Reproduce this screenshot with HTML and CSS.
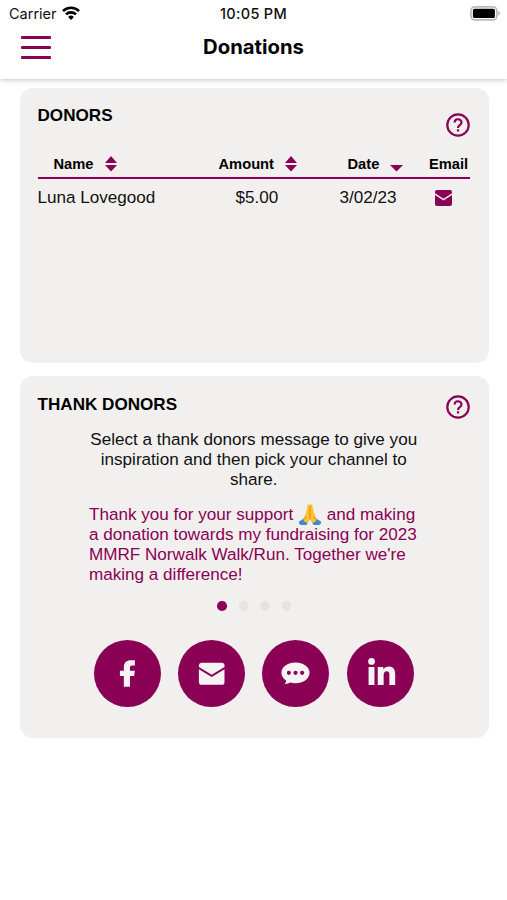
FILE: index.html
```html
<!DOCTYPE html>
<html lang="en">
<head>
    <meta charset="UTF-8">
    <meta name="viewport" content="width=device-width, initial-scale=1.0">
    <title>Donations</title>
    <link rel="stylesheet" href="styles.css">
</head>
<body>

    <header class="header">
        <div class="status">
            <div class="carrier">
                <span>Carrier</span>
                <svg width="18" height="14" viewBox="0 0 18 14">
                    <g fill="none" stroke="#000" stroke-width="2.6">
                        <path d="M1 5.1a11.3 11.3 0 0 1 16 0"/>
                        <path d="M4 8.4a7.1 7.1 0 0 1 10 0"/>
                    </g>
                    <path d="M9 13.9l-2.9-3a4.1 4.1 0 0 1 5.8 0z"/>
                </svg>
            </div>
            <span class="time">10:05 PM</span>
            <svg class="battery" width="31" height="15" viewBox="0 0 31 15">
                <rect x=".9" y=".9" width="26" height="13" rx="3.8" fill="#fff" stroke="#bbb" stroke-width="1.7"/>
                <rect x="2.9" y="2.8" width="22" height="9.2" rx="1.6"/>
                <path d="M28.3 5v4.6c2-.6 2-4 0-4.6z" fill="#aaa"/>
            </svg>
        </div>
        <div class="navbar">
            <div class="menu">
                <span></span>
                <span></span>
                <span></span>
            </div>
            <h1>Donations</h1>
        </div>
    </header>

    <main>
        <section class="card donors">
            <div class="card-top">
                <h2>DONORS</h2>
                <svg class="help" width="24" height="24" viewBox="0 0 24 24">
                    <circle cx="12" cy="12" r="10.7"/>
                    <path d="M8.6 9.6c0-4.5 6.9-4.4 6.9-.2 0 2.7-3.5 2.8-3.5 5.5M12 16.3v2.3"/>
                </svg>
            </div>
            <div class="row head">
                <div class="name">Name
                    <svg class="sort" width="12" height="16" viewBox="0 0 12 16"><path d="M6 0l6 7H0zM0 9h12l-6 6.5z"/></svg>
                </div>
                <div class="amount">Amount
                    <svg class="sort" width="12" height="16" viewBox="0 0 12 16"><path d="M6 0l6 7H0zM0 9h12l-6 6.5z"/></svg>
                </div>
                <div class="date">Date
                    <svg class="sort" width="13" height="16" viewBox="0 0 13 16"><path d="M0 9h13l-6.5 6.5z"/></svg>
                </div>
                <div class="email">Email</div>
            </div>
            <div class="row">
                <div class="name">Luna Lovegood</div>
                <div class="amount">$5.00</div>
                <div class="date">3/02/23</div>
                <div class="email">
                    <svg width="17" height="16" viewBox="0 0 26 23" preserveAspectRatio="none">
                        <path class="fill" d="M3 0h20a3 3 0 0 1 3 3v1.500L13 12.500 0 4.500V3a3 3 0 0 1 3-3zM0 7.200l13 8 13-8V20a3 3 0 0 1-3 3H3a3 3 0 0 1-3-3z"/>
                    </svg>
                </div>
            </div>
        </section>

        <section class="card thank">
            <div class="card-top">
                <h2>THANK DONORS</h2>
                <svg class="help" width="24" height="24" viewBox="0 0 24 24">
                    <circle cx="12" cy="12" r="10.7"/>
                    <path d="M8.6 9.6c0-4.5 6.9-4.4 6.9-.2 0 2.7-3.5 2.8-3.5 5.5M12 16.3v2.3"/>
                </svg>
            </div>
            <p class="intro">Select a thank donors message to give you inspiration and then pick your channel to share.</p>
            <p class="message">Thank you for your support
                <svg class="pray" width="22" height="21" viewBox="0 0 22 21">
                    <path d="M0 17.5l5-3 4 3.500-1.500 3H1.500C.3 20.500 0 19 0 17.500zM22 17.500l-5-3-4 3.500 1.500 3h6c1.200-.5 1.500-2 1.500-3.500z" fill="#4488c4"/>
                    <path d="M10.900 1.200C9.800-.4 8.700 0 8.500 1.600L6.900 9.500l-2.400 5.600c.4 2.500 2 3.700 4.200 3.700l2.300-3.400 2.300 3.400c2.200 0 3.800-1.200 4.200-3.700l-2.400-5.600-1.600-7.900C13.300 0 12 -.4 10.900 1.200z" fill="#fcc433"/>
                    <path d="M11 1.500v14M6.700 12.500l-1 2.800M15.300 12.500l1 2.800" fill="none" stroke="#d58a20" stroke-width="1"/>
                </svg>
                and making<br>a donation towards my fundraising for 2023 MMRF Norwalk Walk/Run. Together we're making a difference!</p>
            <div class="dots">
                <span class="active"></span>
                <span></span>
                <span></span>
                <span></span>
            </div>
            <div class="share">
                <a class="facebook">
                    <svg width="67" height="67" viewBox="0 0 68 68"><path d="M30.300 47.500V36.500H26.300v-5.300h4v-3.700c0-4.600 2.600-7 7-7h4.200v5.300h-2.400c-2 0-2.600.8-2.600 2.500v2.900h5l-.8 5.300h-4.200v11z"/></svg>
                </a>
                <a class="mail">
                    <svg width="67" height="67" viewBox="0 0 68 68"><path transform="translate(21.200 23)" d="M3 0h20a3 3 0 0 1 3 3v1.300L13 12.300 0 4.300V3a3 3 0 0 1 3-3zM0 6.600l13 8 13-8v12.900a3 3 0 0 1-3 3H3a3 3 0 0 1-3-3z"/></svg>
                </a>
                <a class="sms">
                    <svg width="67" height="67" viewBox="0 0 68 68">
                        <path d="M34 22.800c8 0 14.300 4.600 14.300 10.500S42 44 34 44c-2 0-3.800-.3-5.500-.8-1.600 1.100-3.600 1.500-5.500 1.300 1-.9 1.500-2 1.500-3.300-3-1.900-4.800-4.700-4.800-7.900 0-5.900 6.300-10.500 14.300-10.500z"/>
                        <g class="fill"><circle cx="27.300" cy="33.300" r="2.100"/><circle cx="34" cy="33.300" r="2.100"/><circle cx="40.700" cy="33.300" r="2.100"/></g>
                    </svg>
                </a>
                <a class="linkedin">
                    <svg width="67" height="67" viewBox="0 0 68 68">
                        <circle cx="24.900" cy="21.700" r="3.400"/>
                        <path d="M21.900 27.300h6v18.300h-6zM31.200 27.300h5.700v2.500c1-1.800 3-3 5.400-3 5 0 6.600 3.200 6.600 8v10.800h-5.900v-9.800c0-2.500-.4-4.100-2.700-4.100s-3.100 1.700-3.100 4.300v9.600h-6z"/>
                    </svg>
                </a>
            </div>
        </section>
    </main>

</body>
</html>
```
FILE: styles.css
```css
* {
  box-sizing: border-box;
}

body {
  margin: 0;
  background-color: #fff;
  color: #111;
  font-family: "Liberation Sans", Arial, sans-serif;
  font-size: 17.1px;
}

h1, h2, p {
  margin: 0;
}

svg {
  display: block;
}

.header {
  height: 79px;
  box-shadow: 0 1px 5px rgba(0, 0, 0, 0.24);
  font-family: Inter, sans-serif;
}

.status {
  display: grid;
  grid-template-columns: 1fr auto 1fr;
  align-items: center;
  height: 27px;
  padding: 0 6px 0 9px;
  font-size: 14.5px;
}

.carrier {
  display: flex;
  align-items: center;
  gap: 5px;
}

.carrier svg {
  margin-top: -2px;
}

.time {
  margin-right: 3px;
  font-weight: 500;
  letter-spacing: 0.3px;
}

.battery {
  justify-self: end;
}

.navbar {
  display: grid;
  grid-template-columns: 30px 1fr 30px;
  align-items: center;
  height: 40px;
  padding: 0 21px;
}

.menu {
  display: flex;
  flex-direction: column;
  gap: 7.5px;
  margin-top: 1px;
}

.menu span {
  height: 2.5px;
  border-radius: 1px;
  background-color: #8a0055;
}

h1 {
  margin-top: -1px;
  color: #000;
  font-size: 20.3px;
  font-weight: 650;
  text-align: center;
}

main {
  display: flex;
  flex-direction: column;
  gap: 13px;
  padding: 9px 18px 0 20px;
}

.card {
  padding: 18px 19px 0 17.5px;
  border-radius: 13px;
  background-color: #f1f0ee;
}

.donors {
  height: 275px;
}

.thank {
  height: 362px;
}

.card-top {
  display: flex;
  justify-content: space-between;
  height: 32px;
}

h2 {
  color: #000;
  font-size: 17.1px;
  line-height: 20px;
}

.help {
  margin-top: 7px;
  fill: none;
  stroke: #8a0055;
  stroke-width: 2.2;
}

.thank h2 {
  margin-top: 1px;
}

.thank .help {
  margin-top: 1px;
}

.fill {
  fill: #8a0055;
}

.row {
  display: grid;
  grid-template-columns: 181px 121px 89px 1fr;
  align-items: center;
  height: 38px;
}

.head {
  height: 41px;
  padding-top: 12px;
  border-bottom: 2px solid #8a0055;
  color: #000;
  font-size: 14.7px;
  font-weight: bold;
}

.head div {
  display: flex;
  align-items: center;
  gap: 11px;
}

.head .name {
  padding-left: 16px;
}

.amount {
  padding-left: 17px;
}

.head .amount {
  padding-left: 0;
}

.head .date {
  padding-left: 8px;
}

.row .email {
  padding-left: 6px;
}

.head .email {
  padding-left: 0.5px;
}

.sort {
  fill: #8a0055;
}

.intro {
  width: 335px;
  margin: 4px auto 0;
  line-height: 19.8px;
  text-align: center;
}

.message {
  width: 340px;
  margin: 16px 0 0 51.5px;
  color: #8a0055;
  line-height: 19.7px;
}

.pray {
  display: inline-block;
  height: 21px;
  margin: -3px 1px;
  vertical-align: -2px;
}

.dots {
  display: flex;
  justify-content: center;
  gap: 12px;
  margin: 17px 0 0 1px;
}

.dots span {
  width: 9.5px;
  height: 9.5px;
  border-radius: 50%;
  background-color: #e5e4e1;
}

.dots .active {
  background-color: #8a0055;
}

.share {
  display: flex;
  justify-content: center;
  gap: 17.4px;
  margin-top: 29.5px;
}

.share a {
  border-radius: 50%;
  background-color: #8a0055;
  fill: #f5f3f3;
}
```
